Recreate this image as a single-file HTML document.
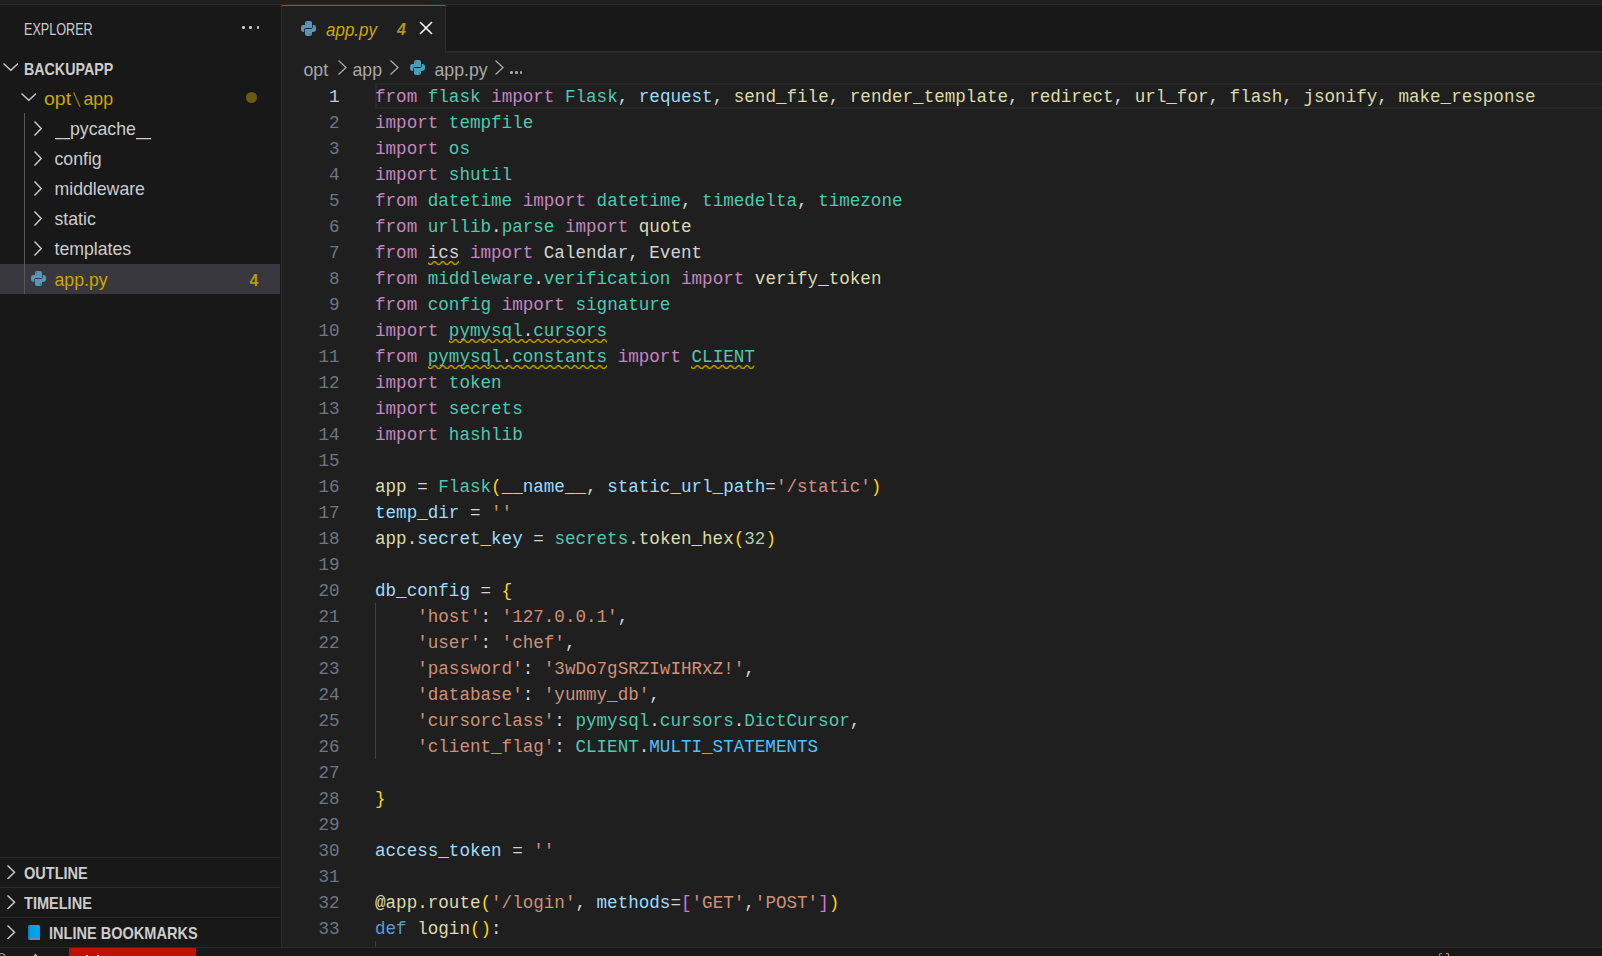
<!DOCTYPE html><html><head><meta charset="utf-8"><style>
*{margin:0;padding:0;box-sizing:border-box}
html,body{width:1602px;height:956px;overflow:hidden;background:#1f1f1f}
body{position:relative;font-family:"Liberation Sans",sans-serif}
.abs{position:absolute}
.code{position:absolute;left:375px;font-family:"Liberation Mono",monospace;font-size:17.58px;line-height:26px;white-space:pre;color:#d4d4d4}
.ln{position:absolute;left:282px;width:57.60000000000002px;text-align:right;font-family:"Liberation Mono",monospace;font-size:17.58px;line-height:26px;color:#6e7681}
.side{color:#cccccc;font-size:17px;white-space:pre}
.row{position:absolute;left:0;width:281px;height:30px}
.lbl{position:absolute;top:0;line-height:30px;font-size:17px;color:#cccccc;white-space:pre}
.hdr{position:absolute;left:0;width:281px;height:30px;border-top:1px solid #2b2b2b}
.hdr .lbl{font-weight:bold;font-size:15px;line-height:29px}
</style></head><body>

<div class="abs" style="left:0;top:0;width:1602px;height:4px;background:#1f1f1f"></div>
<div class="abs" style="left:0;top:4px;width:1602px;height:1px;background:#2b2b2b"></div>
<div class="abs" style="left:0;top:5px;width:281px;height:942px;background:#181818"></div>
<div class="abs" style="left:281px;top:5px;width:1px;height:942px;background:#2b2b2b"></div>
<div class="abs" style="left:282px;top:5px;width:1320px;height:46px;background:#181818"></div>
<div class="abs" style="left:282px;top:51px;width:1320px;height:1px;background:#2b2b2b"></div>
<div class="abs" style="left:445px;top:52px;width:1157px;height:1px;background:#262626"></div>
<div class="abs" style="left:282px;top:5px;width:163px;height:47px;background:#1f1f1f"></div>
<div class="abs" style="left:282px;top:5px;width:163px;height:1px;background:#0078d4"></div>
<div class="abs" style="left:445px;top:5px;width:1px;height:46px;background:#2b2b2b"></div>
<div class="abs" style="left:0;top:947px;width:1602px;height:1px;background:#2b2b2b"></div>
<div class="abs" style="left:0;top:948px;width:1602px;height:8px;background:#181818"></div>
<div class="abs" style="left:69px;top:948px;width:127px;height:8px;background:#be1100"></div>
<div class="abs" style="left:375px;top:83px;width:1227px;height:26px;border:2px solid #282828;border-right:none"></div>
<div class="code" style="top:84px"><span style="color:#C586C0">from</span> <span style="color:#4EC9B0">flask</span> <span style="color:#C586C0">import</span> <span style="color:#4EC9B0">Flask</span>, <span style="color:#9CDCFE">request</span>, <span style="color:#DCDCAA">send_file</span>, <span style="color:#DCDCAA">render_template</span>, <span style="color:#DCDCAA">redirect</span>, <span style="color:#DCDCAA">url_for</span>, <span style="color:#DCDCAA">flash</span>, <span style="color:#DCDCAA">jsonify</span>, <span style="color:#DCDCAA">make_response</span></div>
<div class="ln" style="top:84px;color:#cccccc">1</div>
<div class="code" style="top:110px"><span style="color:#C586C0">import</span> <span style="color:#4EC9B0">tempfile</span></div>
<div class="ln" style="top:110px;color:#6e7681">2</div>
<div class="code" style="top:136px"><span style="color:#C586C0">import</span> <span style="color:#4EC9B0">os</span></div>
<div class="ln" style="top:136px;color:#6e7681">3</div>
<div class="code" style="top:162px"><span style="color:#C586C0">import</span> <span style="color:#4EC9B0">shutil</span></div>
<div class="ln" style="top:162px;color:#6e7681">4</div>
<div class="code" style="top:188px"><span style="color:#C586C0">from</span> <span style="color:#4EC9B0">datetime</span> <span style="color:#C586C0">import</span> <span style="color:#4EC9B0">datetime</span>, <span style="color:#4EC9B0">timedelta</span>, <span style="color:#4EC9B0">timezone</span></div>
<div class="ln" style="top:188px;color:#6e7681">5</div>
<div class="code" style="top:214px"><span style="color:#C586C0">from</span> <span style="color:#4EC9B0">urllib</span>.<span style="color:#4EC9B0">parse</span> <span style="color:#C586C0">import</span> <span style="color:#DCDCAA">quote</span></div>
<div class="ln" style="top:214px;color:#6e7681">6</div>
<div class="code" style="top:240px"><span style="color:#C586C0">from</span> ics <span style="color:#C586C0">import</span> Calendar, Event</div>
<div class="ln" style="top:240px;color:#6e7681">7</div>
<div class="code" style="top:266px"><span style="color:#C586C0">from</span> <span style="color:#4EC9B0">middleware</span>.<span style="color:#4EC9B0">verification</span> <span style="color:#C586C0">import</span> <span style="color:#DCDCAA">verify_token</span></div>
<div class="ln" style="top:266px;color:#6e7681">8</div>
<div class="code" style="top:292px"><span style="color:#C586C0">from</span> <span style="color:#4EC9B0">config</span> <span style="color:#C586C0">import</span> <span style="color:#4EC9B0">signature</span></div>
<div class="ln" style="top:292px;color:#6e7681">9</div>
<div class="code" style="top:318px"><span style="color:#C586C0">import</span> <span style="color:#4EC9B0">pymysql</span>.<span style="color:#4EC9B0">cursors</span></div>
<div class="ln" style="top:318px;color:#6e7681">10</div>
<div class="code" style="top:344px"><span style="color:#C586C0">from</span> <span style="color:#4EC9B0">pymysql</span>.<span style="color:#4EC9B0">constants</span> <span style="color:#C586C0">import</span> <span style="color:#4EC9B0">CLIENT</span></div>
<div class="ln" style="top:344px;color:#6e7681">11</div>
<div class="code" style="top:370px"><span style="color:#C586C0">import</span> <span style="color:#4EC9B0">token</span></div>
<div class="ln" style="top:370px;color:#6e7681">12</div>
<div class="code" style="top:396px"><span style="color:#C586C0">import</span> <span style="color:#4EC9B0">secrets</span></div>
<div class="ln" style="top:396px;color:#6e7681">13</div>
<div class="code" style="top:422px"><span style="color:#C586C0">import</span> <span style="color:#4EC9B0">hashlib</span></div>
<div class="ln" style="top:422px;color:#6e7681">14</div>
<div class="code" style="top:448px"></div>
<div class="ln" style="top:448px;color:#6e7681">15</div>
<div class="code" style="top:474px"><span style="color:#DCDCAA">app</span> = <span style="color:#4EC9B0">Flask</span><span style="color:#FFD700">(</span><span style="color:#9CDCFE">__name__</span>, <span style="color:#9CDCFE">static_url_path</span>=<span style="color:#CE9178">&#x27;/static&#x27;</span><span style="color:#FFD700">)</span></div>
<div class="ln" style="top:474px;color:#6e7681">16</div>
<div class="code" style="top:500px"><span style="color:#9CDCFE">temp_dir</span> = <span style="color:#CE9178">&#x27;&#x27;</span></div>
<div class="ln" style="top:500px;color:#6e7681">17</div>
<div class="code" style="top:526px"><span style="color:#DCDCAA">app</span>.<span style="color:#9CDCFE">secret_key</span> = <span style="color:#4EC9B0">secrets</span>.<span style="color:#DCDCAA">token_hex</span><span style="color:#FFD700">(</span><span style="color:#B5CEA8">32</span><span style="color:#FFD700">)</span></div>
<div class="ln" style="top:526px;color:#6e7681">18</div>
<div class="code" style="top:552px"></div>
<div class="ln" style="top:552px;color:#6e7681">19</div>
<div class="code" style="top:578px"><span style="color:#9CDCFE">db_config</span> = <span style="color:#FFD700">{</span></div>
<div class="ln" style="top:578px;color:#6e7681">20</div>
<div class="code" style="top:604px">    <span style="color:#CE9178">&#x27;host&#x27;</span>: <span style="color:#CE9178">&#x27;127.0.0.1&#x27;</span>,</div>
<div class="ln" style="top:604px;color:#6e7681">21</div>
<div class="code" style="top:630px">    <span style="color:#CE9178">&#x27;user&#x27;</span>: <span style="color:#CE9178">&#x27;chef&#x27;</span>,</div>
<div class="ln" style="top:630px;color:#6e7681">22</div>
<div class="code" style="top:656px">    <span style="color:#CE9178">&#x27;password&#x27;</span>: <span style="color:#CE9178">&#x27;3wDo7gSRZIwIHRxZ!&#x27;</span>,</div>
<div class="ln" style="top:656px;color:#6e7681">23</div>
<div class="code" style="top:682px">    <span style="color:#CE9178">&#x27;database&#x27;</span>: <span style="color:#CE9178">&#x27;yummy_db&#x27;</span>,</div>
<div class="ln" style="top:682px;color:#6e7681">24</div>
<div class="code" style="top:708px">    <span style="color:#CE9178">&#x27;cursorclass&#x27;</span>: <span style="color:#4EC9B0">pymysql</span>.<span style="color:#4EC9B0">cursors</span>.<span style="color:#4EC9B0">DictCursor</span>,</div>
<div class="ln" style="top:708px;color:#6e7681">25</div>
<div class="code" style="top:734px">    <span style="color:#CE9178">&#x27;client_flag&#x27;</span>: <span style="color:#4EC9B0">CLIENT</span>.<span style="color:#4FC1FF">MULTI_STATEMENTS</span></div>
<div class="ln" style="top:734px;color:#6e7681">26</div>
<div class="code" style="top:760px"></div>
<div class="ln" style="top:760px;color:#6e7681">27</div>
<div class="code" style="top:786px"><span style="color:#FFD700">}</span></div>
<div class="ln" style="top:786px;color:#6e7681">28</div>
<div class="code" style="top:812px"></div>
<div class="ln" style="top:812px;color:#6e7681">29</div>
<div class="code" style="top:838px"><span style="color:#9CDCFE">access_token</span> = <span style="color:#CE9178">&#x27;&#x27;</span></div>
<div class="ln" style="top:838px;color:#6e7681">30</div>
<div class="code" style="top:864px"></div>
<div class="ln" style="top:864px;color:#6e7681">31</div>
<div class="code" style="top:890px"><span style="color:#DCDCAA">@app.route</span><span style="color:#FFD700">(</span><span style="color:#CE9178">&#x27;/login&#x27;</span>, <span style="color:#9CDCFE">methods</span>=<span style="color:#DA70D6">[</span><span style="color:#CE9178">&#x27;GET&#x27;</span>,<span style="color:#CE9178">&#x27;POST&#x27;</span><span style="color:#DA70D6">]</span><span style="color:#FFD700">)</span></div>
<div class="ln" style="top:890px;color:#6e7681">32</div>
<div class="code" style="top:916px"><span style="color:#569CD6">def</span> <span style="color:#DCDCAA">login</span><span style="color:#FFD700">(</span><span style="color:#FFD700">)</span>:</div>
<div class="ln" style="top:916px;color:#6e7681">33</div>
<div class="abs" style="left:375px;top:603px;width:1px;height:156px;background:#404040"></div>
<div class="abs" style="left:375px;top:941px;width:1px;height:6px;background:#404040"></div>
<svg class="abs" style="left:0;top:0" width="1602" height="956"><defs><pattern id="sq" patternUnits="userSpaceOnUse" width="8.25" height="4.125" x="0" y="0"><g fill="#cca700" transform="scale(1.375)"><polygon points="5.5,0 2.5,3 1.1,3 4.1,0"/><polygon points="4,0 6,2 6,0.6 5.4,0"/><polygon points="0,2 1,3 2.4,3 0,0.6"/></g></pattern></defs></svg>
<svg class="abs" style="left:427.74px;top:261px" width="31.64" height="5"><defs><pattern id="sq7_5" patternUnits="userSpaceOnUse" width="8.25" height="4.125"><g fill="#cca700" transform="scale(1.375)"><polygon points="5.5,0 2.5,3 1.1,3 4.1,0"/><polygon points="4,0 6,2 6,0.6 5.4,0"/><polygon points="0,2 1,3 2.4,3 0,0.6"/></g></pattern></defs><rect x="0" y="0" width="31.64" height="4.125" fill="url(#sq7_5)"/></svg>
<svg class="abs" style="left:448.84px;top:339px" width="158.22" height="5"><defs><pattern id="sq10_7" patternUnits="userSpaceOnUse" width="8.25" height="4.125"><g fill="#cca700" transform="scale(1.375)"><polygon points="5.5,0 2.5,3 1.1,3 4.1,0"/><polygon points="4,0 6,2 6,0.6 5.4,0"/><polygon points="0,2 1,3 2.4,3 0,0.6"/></g></pattern></defs><rect x="0" y="0" width="158.22" height="4.125" fill="url(#sq10_7)"/></svg>
<svg class="abs" style="left:427.74px;top:365px" width="179.32" height="5"><defs><pattern id="sq11_5" patternUnits="userSpaceOnUse" width="8.25" height="4.125"><g fill="#cca700" transform="scale(1.375)"><polygon points="5.5,0 2.5,3 1.1,3 4.1,0"/><polygon points="4,0 6,2 6,0.6 5.4,0"/><polygon points="0,2 1,3 2.4,3 0,0.6"/></g></pattern></defs><rect x="0" y="0" width="179.32" height="4.125" fill="url(#sq11_5)"/></svg>
<svg class="abs" style="left:691.44px;top:365px" width="63.29" height="5"><defs><pattern id="sq11_30" patternUnits="userSpaceOnUse" width="8.25" height="4.125"><g fill="#cca700" transform="scale(1.375)"><polygon points="5.5,0 2.5,3 1.1,3 4.1,0"/><polygon points="4,0 6,2 6,0.6 5.4,0"/><polygon points="0,2 1,3 2.4,3 0,0.6"/></g></pattern></defs><rect x="0" y="0" width="63.29" height="4.125" fill="url(#sq11_30)"/></svg>
<div class="abs" style="left:-3px;top:953px;width:9px;height:9px;border:1.3px solid #bbbbbb;border-radius:50%"></div>
<svg class="abs" style="left:30px;top:952.5px" width="12" height="6"><path d="M1 7L5.5 1.5L10 7" fill="none" stroke="#bbbbbb" stroke-width="1.2"/></svg>
<div class="abs" style="left:86px;top:955px;width:2px;height:1px;background:#ffffff"></div>
<div class="abs" style="left:97px;top:955px;width:2px;height:1px;background:#ffffff"></div>
<div class="abs" style="left:1439px;top:953px;width:3px;height:3px;border-left:1.5px solid #519aba;border-top:1.5px solid #519aba;border-radius:2px 0 0 0"></div>
<div class="abs" style="left:1446px;top:953px;width:3px;height:3px;border-right:1.5px solid #e8ab53;border-top:1.5px solid #e8ab53;border-radius:0 2px 0 0"></div>
<div class="abs" style="left:24px;top:13.5px;font-size:16.3px;line-height:30px;color:#cccccc;white-space:pre;transform:scaleX(0.775);transform-origin:0 0">EXPLORER</div>
<div class="abs" style="left:242.2px;top:26.4px;width:2.6px;height:2.6px;border-radius:50%;background:#cccccc"></div>
<div class="abs" style="left:249.4px;top:26.4px;width:2.6px;height:2.6px;border-radius:50%;background:#cccccc"></div>
<div class="abs" style="left:256.6px;top:26.4px;width:2.6px;height:2.6px;border-radius:50%;background:#cccccc"></div>
<svg class="abs" style="left:3px;top:62.8px" width="15" height="9" viewBox="0 0 15 9"><path d="M1 1 L7.8 7.2 L14.6 1" fill="none" stroke="#cccccc" stroke-width="1.4" stroke-linecap="square"/></svg>
<div class="abs" style="left:24px;top:54px;font-size:16.3px;line-height:30px;color:#cccccc;white-space:pre;font-weight:bold;transform:scaleX(0.875);transform-origin:0 0">BACKUPAPP</div>
<svg class="abs" style="left:21px;top:92.8px" width="15" height="9" viewBox="0 0 15 9"><path d="M1 1 L7.8 7.2 L14.6 1" fill="none" stroke="#cccccc" stroke-width="1.4" stroke-linecap="square"/></svg>
<div class="abs" style="left:44px;top:83.74px;font-size:17.7px;line-height:30px;color:#cca700;white-space:pre;transform:scaleX(1.1);transform-origin:0 0">opt</div>
<div class="abs" style="left:83.5px;top:83.74px;font-size:17.7px;line-height:30px;color:#cca700;white-space:pre;">app</div>
<svg class="abs" style="left:72px;top:91px" width="10" height="18"><path d="M1.6 1.2L8 15.8" stroke="#8f7a1c" stroke-width="1.3"/></svg>
<div class="abs" style="left:246px;top:92px;width:11px;height:11px;border-radius:50%;background:#6b5b12"></div>
<div class="abs" style="left:24px;top:113px;width:1px;height:181px;background:#585858"></div>
<svg class="abs" style="left:34.2px;top:120.8px" width="9" height="15" viewBox="0 0 9 15"><path d="M1 1 L7.2 7.5 L1 14" fill="none" stroke="#cccccc" stroke-width="1.45" stroke-linecap="square"/></svg>
<div class="abs" style="left:54.5px;top:113.88px;font-size:17.7px;line-height:30px;color:#cccccc;white-space:pre;"><span style="display:inline-block;width:7.75px;overflow:hidden;vertical-align:top">_</span><span style="display:inline-block;width:7.75px;overflow:hidden;vertical-align:top">_</span>pycache<span style="display:inline-block;width:7.75px;overflow:hidden;vertical-align:top">_</span><span style="display:inline-block;width:7.75px;overflow:hidden;vertical-align:top">_</span></div>
<svg class="abs" style="left:34.2px;top:150.8px" width="9" height="15" viewBox="0 0 9 15"><path d="M1 1 L7.2 7.5 L1 14" fill="none" stroke="#cccccc" stroke-width="1.45" stroke-linecap="square"/></svg>
<div class="abs" style="left:54.5px;top:144.02px;font-size:17.7px;line-height:30px;color:#cccccc;white-space:pre;">config</div>
<svg class="abs" style="left:34.2px;top:180.8px" width="9" height="15" viewBox="0 0 9 15"><path d="M1 1 L7.2 7.5 L1 14" fill="none" stroke="#cccccc" stroke-width="1.45" stroke-linecap="square"/></svg>
<div class="abs" style="left:54.5px;top:174.16px;font-size:17.7px;line-height:30px;color:#cccccc;white-space:pre;">middleware</div>
<svg class="abs" style="left:34.2px;top:210.8px" width="9" height="15" viewBox="0 0 9 15"><path d="M1 1 L7.2 7.5 L1 14" fill="none" stroke="#cccccc" stroke-width="1.45" stroke-linecap="square"/></svg>
<div class="abs" style="left:54.5px;top:204.3px;font-size:17.7px;line-height:30px;color:#cccccc;white-space:pre;">static</div>
<svg class="abs" style="left:34.2px;top:240.8px" width="9" height="15" viewBox="0 0 9 15"><path d="M1 1 L7.2 7.5 L1 14" fill="none" stroke="#cccccc" stroke-width="1.45" stroke-linecap="square"/></svg>
<div class="abs" style="left:54.5px;top:234.44px;font-size:17.7px;line-height:30px;color:#cccccc;white-space:pre;">templates</div>
<div class="abs" style="left:0;top:264px;width:280px;height:30px;background:#37373d"></div>
<div class="abs" style="left:24px;top:264px;width:1px;height:30px;background:#585858"></div>
<svg width="15" height="15" viewBox="0 0 15 15" style="position:absolute;left:30.5px;top:271px"><g fill="#519aba"><path d="M6 0H9Q11 0 11 2V7.1H5Q3.2 7.1 3.2 8.9V11H2.4Q0 11 0 8.6V6.4Q0 4 2.4 4H4V2Q4 0 6 0Z"/><path transform="rotate(180 7.5 7.5)" d="M6 0H9Q11 0 11 2V7.1H5Q3.2 7.1 3.2 8.9V11H2.4Q0 11 0 8.6V6.4Q0 4 2.4 4H4V2Q4 0 6 0Z"/></g><circle cx="5.8" cy="1.8" r="0.6" fill="#1f1f1f" opacity=".5"/><circle cx="9.2" cy="13.2" r="0.6" fill="#1f1f1f" opacity=".5"/></svg>
<div class="abs" style="left:54.5px;top:264.6px;font-size:17.7px;line-height:30px;color:#cca700;white-space:pre;">app.py</div>
<div class="abs" style="left:249.5px;top:265.5px;font-size:16px;line-height:30px;color:#b39a12;white-space:pre;font-weight:bold">4</div>
<div class="abs" style="left:0;top:857px;width:280px;height:1px;background:#2b2b2b"></div>
<svg class="abs" style="left:6.5px;top:864.5px" width="9" height="14" viewBox="0 0 9 14"><path d="M1 1 L7.5 7.25 L1 13.5" fill="none" stroke="#cccccc" stroke-width="1.5" stroke-linecap="square"/></svg>
<div class="abs" style="left:24px;top:858.5px;font-size:17px;line-height:30px;color:#cccccc;white-space:pre;font-weight:bold;transform:scaleX(0.855);transform-origin:0 0">OUTLINE</div>
<div class="abs" style="left:0;top:887px;width:280px;height:1px;background:#2b2b2b"></div>
<svg class="abs" style="left:6.5px;top:894.5px" width="9" height="14" viewBox="0 0 9 14"><path d="M1 1 L7.5 7.25 L1 13.5" fill="none" stroke="#cccccc" stroke-width="1.5" stroke-linecap="square"/></svg>
<div class="abs" style="left:24px;top:888.5px;font-size:17px;line-height:30px;color:#cccccc;white-space:pre;font-weight:bold;transform:scaleX(0.855);transform-origin:0 0">TIMELINE</div>
<div class="abs" style="left:0;top:917px;width:280px;height:1px;background:#2b2b2b"></div>
<svg class="abs" style="left:6.5px;top:924.5px" width="9" height="14" viewBox="0 0 9 14"><path d="M1 1 L7.5 7.25 L1 13.5" fill="none" stroke="#cccccc" stroke-width="1.5" stroke-linecap="square"/></svg>
<div class="abs" style="left:28px;top:925px;width:12px;height:15px;background:#00a2e8;border-radius:1.5px;border-left:2px solid #0a86c8"></div>
<div class="abs" style="left:30px;top:938px;width:10px;height:1.6px;background:#5d8fb0"></div>
<div class="abs" style="left:49px;top:918.5px;font-size:17px;line-height:30px;color:#cccccc;white-space:pre;font-weight:bold;transform:scaleX(0.855);transform-origin:0 0">INLINE BOOKMARKS</div>
<svg width="15" height="15" viewBox="0 0 15 15" style="position:absolute;left:301px;top:21px"><g fill="#519aba"><path d="M6 0H9Q11 0 11 2V7.1H5Q3.2 7.1 3.2 8.9V11H2.4Q0 11 0 8.6V6.4Q0 4 2.4 4H4V2Q4 0 6 0Z"/><path transform="rotate(180 7.5 7.5)" d="M6 0H9Q11 0 11 2V7.1H5Q3.2 7.1 3.2 8.9V11H2.4Q0 11 0 8.6V6.4Q0 4 2.4 4H4V2Q4 0 6 0Z"/></g><circle cx="5.8" cy="1.8" r="0.6" fill="#1f1f1f" opacity=".5"/><circle cx="9.2" cy="13.2" r="0.6" fill="#1f1f1f" opacity=".5"/></svg>
<div class="abs" style="left:325.5px;top:15px;font-size:17.7px;line-height:30px;color:#cca700;white-space:pre;font-style:italic;transform:scaleX(0.96);transform-origin:0 0">app.py</div>
<div class="abs" style="left:397px;top:15px;font-size:16px;line-height:30px;color:#b39414;white-space:pre;font-style:italic;font-weight:bold">4</div>
<svg class="abs" style="left:418px;top:20px" width="16" height="16" viewBox="0 0 16 16"><path d="M2 2L14 14M14 2L2 14" stroke="#ffffff" stroke-width="1.6"/></svg>
<div class="abs" style="left:303.5px;top:54.5px;font-size:17.7px;line-height:30px;color:#a9a9a9;white-space:pre;">opt</div>
<svg class="abs" style="left:337.5px;top:59.5px" width="10" height="15" viewBox="0 0 10 15"><path d="M1 1 L8 7.5 L1 14" fill="none" stroke="#a9a9a9" stroke-width="1.3" stroke-linecap="square"/></svg>
<div class="abs" style="left:352.5px;top:54.5px;font-size:17.7px;line-height:30px;color:#a9a9a9;white-space:pre;">app</div>
<svg class="abs" style="left:389.5px;top:59.5px" width="10" height="15" viewBox="0 0 10 15"><path d="M1 1 L8 7.5 L1 14" fill="none" stroke="#a9a9a9" stroke-width="1.3" stroke-linecap="square"/></svg>
<svg width="15" height="15" viewBox="0 0 15 15" style="position:absolute;left:410px;top:60px"><g fill="#519aba"><path d="M6 0H9Q11 0 11 2V7.1H5Q3.2 7.1 3.2 8.9V11H2.4Q0 11 0 8.6V6.4Q0 4 2.4 4H4V2Q4 0 6 0Z"/><path transform="rotate(180 7.5 7.5)" d="M6 0H9Q11 0 11 2V7.1H5Q3.2 7.1 3.2 8.9V11H2.4Q0 11 0 8.6V6.4Q0 4 2.4 4H4V2Q4 0 6 0Z"/></g><circle cx="5.8" cy="1.8" r="0.6" fill="#1f1f1f" opacity=".5"/><circle cx="9.2" cy="13.2" r="0.6" fill="#1f1f1f" opacity=".5"/></svg>
<div class="abs" style="left:434.5px;top:54.5px;font-size:17.7px;line-height:30px;color:#a9a9a9;white-space:pre;">app.py</div>
<svg class="abs" style="left:494.5px;top:59.5px" width="10" height="15" viewBox="0 0 10 15"><path d="M1 1 L8 7.5 L1 14" fill="none" stroke="#a9a9a9" stroke-width="1.3" stroke-linecap="square"/></svg>
<div class="abs" style="left:510.3px;top:71.3px;width:2.6px;height:2.6px;border-radius:50%;background:#a9a9a9"></div>
<div class="abs" style="left:515px;top:71.3px;width:2.6px;height:2.6px;border-radius:50%;background:#a9a9a9"></div>
<div class="abs" style="left:519.7px;top:71.3px;width:2.6px;height:2.6px;border-radius:50%;background:#a9a9a9"></div>
</body></html>
